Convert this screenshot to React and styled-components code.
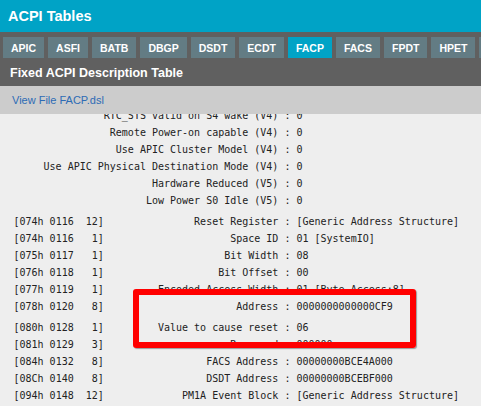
import React, { useLayoutEffect, useRef } from "react";
import styled, { createGlobalStyle } from "styled-components";

const GlobalStyle = createGlobalStyle`
  html, body {
    margin: 0;
    padding: 0;
    background: #eeeeee;
  }
`;

const tabs = ["APIC", "ASFI", "BATB", "DBGP", "DSDT", "ECDT", "FACP", "FACS", "FPDT", "HPET", "MCFG"];

const groups = [
  [
    { label: "RTC_STS valid on S4 wake (V4)", value: "0" },
    { label: "Remote Power-on capable (V4)", value: "0" },
    { label: "Use APIC Cluster Model (V4)", value: "0" },
    { label: "Use APIC Physical Destination Mode (V4)", value: "0" },
    { label: "Hardware Reduced (V5)", value: "0" },
    { label: "Low Power S0 Idle (V5)", value: "0" },
  ],
  [
    { offset: "[074h 0116  12]", label: "Reset Register", value: "[Generic Address Structure]" },
    { offset: "[074h 0116   1]", label: "Space ID", value: "01 [SystemIO]" },
    { offset: "[075h 0117   1]", label: "Bit Width", value: "08" },
    { offset: "[076h 0118   1]", label: "Bit Offset", value: "00" },
    { offset: "[077h 0119   1]", label: "Encoded Access Width", value: "01 [Byte Access:8]" },
    { offset: "[078h 0120   8]", label: "Address", value: "0000000000000CF9" },
  ],
  [
    { offset: "[080h 0128   1]", label: "Value to cause reset", value: "06" },
    { offset: "[081h 0129   3]", label: "Reserved", value: "000000" },
    { offset: "[084h 0132   8]", label: "FACS Address", value: "00000000BCE4A000" },
    { offset: "[08Ch 0140   8]", label: "DSDT Address", value: "00000000BCEBF000" },
    { offset: "[094h 0148  12]", label: "PM1A Event Block", value: "[Generic Address Structure]" },
    { offset: "[094h 0148   1]", label: "Space ID", value: "01 [SystemIO]" },
    { offset: "[095h 0149   1]", label: "Bit Width", value: "20" },
  ],
];

const App = () => {
  const dumpRef = useRef(null);

  useLayoutEffect(() => {
    if (dumpRef.current) dumpRef.current.scrollTop = 7;
  }, []);

  return (
    <>
      <GlobalStyle />
      <Page>
        <Header>ACPI Tables</Header>
        <TabStrip>
          {tabs.map((t) => (
            <Tab key={t} $active={t === "FACP"}>
              {t}
            </Tab>
          ))}
        </TabStrip>
        <Title>Fixed ACPI Description Table</Title>
        <LinkBar>
          <a href="#facp">View File FACP.dsl</a>
        </LinkBar>
        <Dump ref={dumpRef}>
          <Listing>
            {groups.map((rows, gi) => (
              <Group key={gi}>
                {rows.map((r, i) => (
                  <Line key={i}>
                    {r.offset && <Offset>{r.offset}</Offset>}
                    <Label $wide={!r.offset}>{r.label}</Label>
                    <Sep> : </Sep>
                    <span>{r.value}</span>
                  </Line>
                ))}
              </Group>
            ))}
            <Highlight />
          </Listing>
        </Dump>
      </Page>
    </>
  );
};

export default App;

const Page = styled.div`
  width: 481px;
  height: 406px;
  display: flex;
  flex-direction: column;
  overflow: hidden;
  background: #eeeeee;
  font-family: "Liberation Sans", Arial, sans-serif;
`;

const Header = styled.header`
  flex: 0 0 32px;
  display: flex;
  align-items: center;
  padding: 0 8px;
  background: #00a3c6;
  color: #fff;
  font-size: 14.5px;
  font-weight: 700;
`;

const TabStrip = styled.nav`
  flex: 0 0 28px;
  box-sizing: border-box;
  display: flex;
  gap: 4px;
  padding: 5px 0 2px 3px;
  background: #606060;
  overflow: hidden;
`;

const Tab = styled.div`
  flex: 0 0 auto;
  height: 21px;
  display: flex;
  align-items: center;
  padding: 0 8px;
  background: ${(p) => (p.$active ? "#00a3c6" : "#637c84")};
  color: #fff;
  font-size: 10.5px;
  font-weight: 700;
`;

const Title = styled.div`
  flex: 0 0 26px;
  display: flex;
  align-items: center;
  padding-left: 10px;
  background: #606060;
  color: #fff;
  font-size: 12.5px;
  font-weight: 700;
`;

const LinkBar = styled.div`
  flex: 0 0 28px;
  display: flex;
  align-items: center;
  padding-left: 12px;
  background: #cccccc;
  font-size: 11px;

  a {
    color: #2d6bb5;
    text-decoration: none;
  }
`;

const Dump = styled.div`
  flex: 1;
  overflow: auto;
  scrollbar-width: none;
  &::-webkit-scrollbar {
    display: none;
  }
`;

const Listing = styled.div`
  position: relative;
  padding-left: 13.5px;
  font-family: "DejaVu Sans Mono", "Liberation Mono", monospace;
  font-size: 10px;
  line-height: 17px;
  color: #222;
`;

const Group = styled.div`
  & + & {
    margin-top: 4px;
  }
`;

const Line = styled.div`
  display: flex;
  white-space: pre;
`;

const Offset = styled.span`
  flex: 0 0 16ch;
`;

const Label = styled.span`
  flex: 0 0 ${(p) => (p.$wide ? "44ch" : "28ch")};
  text-align: right;
`;

const Sep = styled.span`
  flex: 0 0 auto;
`;

const Highlight = styled.div`
  position: absolute;
  top: 182px;
  left: 133px;
  width: 283px;
  height: 59px;
  box-sizing: border-box;
  border: 6.5px solid #ff0000;
  border-radius: 3px;
  box-shadow: 1px 1px 1px rgba(0, 0, 0, 0.35);
`;
